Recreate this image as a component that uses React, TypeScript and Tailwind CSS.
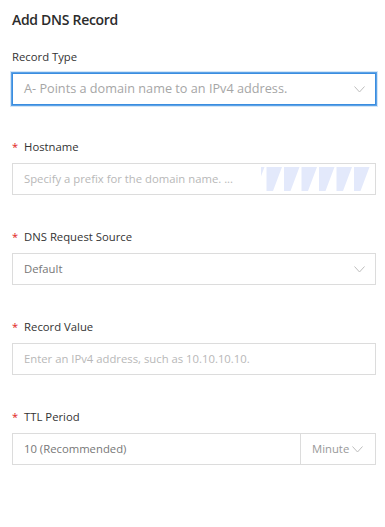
import React from 'react';

const font = { fontFamily: '"Segoe UI", "Open Sans", "Noto Sans", sans-serif' };

function Chevron() {
  return (
    <svg width="11" height="7" viewBox="0 0 11 7" fill="none" className="shrink-0">
      <path d="M0.5 0.5 L5.5 6 L10.5 0.5" stroke="#bdbdbd" strokeWidth="1" />
    </svg>
  );
}

function Stripes() {
  // decorative sawtooth block drawn over the hostname input
  const cuts = [0, 1, 2, 3, 4, 5, 6].map((i) => -12.5 + 17.5 * i);
  return (
    <svg width="109" height="24" viewBox="0 0 109 24" className="absolute right-[5px] top-[3px]">
      <rect x="0" y="0" width="109" height="24" fill="#e3e9fb" />
      {cuts.map((p) => (
        <polygon key={p} points={`${p + 16},0 ${p + 18},0 ${p + 18},24 ${p + 7},24`} fill="#ffffff" />
      ))}
    </svg>
  );
}

function Label({ text, required }: { text: string; required?: boolean }) {
  return (
    <div className="flex items-center h-[18px] mb-[7px] text-[11.3px] text-[#333]">
      {required && <span className="text-[#e02020] mr-[6px] text-[11px]">*</span>}
      {text}
    </div>
  );
}

export default function App() {
  return (
    <div style={font} className="w-[385px] h-[527px] bg-white pl-3 pr-[9px] pt-[10px]">
      <h2 className="text-[14px] leading-[20px] font-semibold tracking-[-0.3px] text-[#2b2b2b]">Add DNS Record</h2>

      {/* Record Type */}
      <div className="mt-[18px] mb-[33px]">
        <Label text="Record Type" />
        <div className="h-8 flex items-center justify-between pl-[11px] pr-[10px] border border-[#3a8de0] shadow-[0_0_0_1px_#5da2e6,0_0_0_2px_#d3e6f8] text-[12.7px] text-[#a6a6a6]">
          <span>A- Points a domain name to an IPv4 address.</span>
          <Chevron />
        </div>
      </div>

      {/* Hostname */}
      <div className="mb-[33px]">
        <Label text="Hostname" required />
        <div className="relative h-8 flex items-center pl-[11px] border border-[#dcdcdc] text-[11.3px] text-[#b8b8b8]">
          <span>Specify a prefix for the domain name. ...</span>
          <Stripes />
        </div>
      </div>

      {/* DNS Request Source */}
      <div className="mb-[33px]">
        <Label text="DNS Request Source" required />
        <div className="h-8 flex items-center justify-between pl-[11px] pr-[10px] border border-[#dcdcdc] text-[11.3px] text-[#777]">
          <span>Default</span>
          <Chevron />
        </div>
      </div>

      {/* Record Value */}
      <div className="mb-[33px]">
        <Label text="Record Value" required />
        <div className="h-8 flex items-center pl-[11px] border border-[#dcdcdc] text-[11.3px] text-[#b8b8b8]">
          <span>Enter an IPv4 address, such as 10.10.10.10.</span>
        </div>
      </div>

      {/* TTL Period */}
      <div>
        <Label text="TTL Period" required />
        <div className="h-8 flex border border-[#dcdcdc] text-[11.3px] text-[#777]">
          <div className="flex-1 flex items-center pl-[11px]">10 (Recommended)</div>
          <div className="w-[75px] flex items-center gap-[3px] pl-[11px] border-l border-[#dcdcdc] text-[#999]">
            <span>Minute</span>
            <Chevron />
          </div>
        </div>
      </div>
    </div>
  );
}
